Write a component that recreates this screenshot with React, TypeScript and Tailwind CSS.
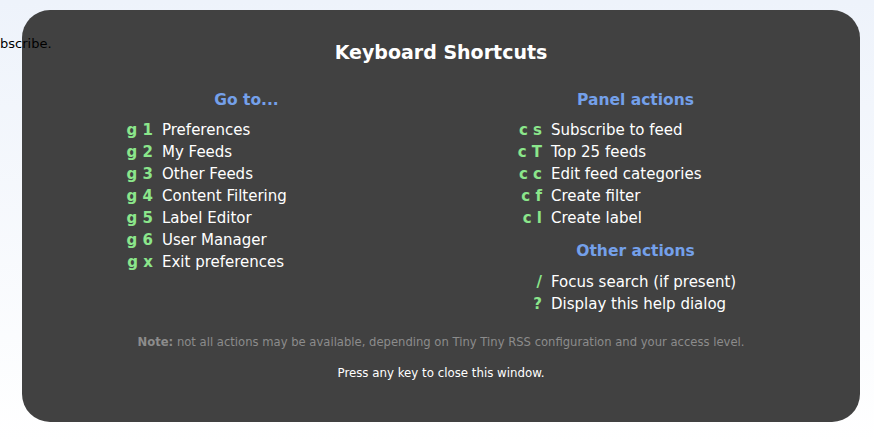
import React from "react";

const goTo: [string, string][] = [
  ["g 1", "Preferences"],
  ["g 2", "My Feeds"],
  ["g 3", "Other Feeds"],
  ["g 4", "Content Filtering"],
  ["g 5", "Label Editor"],
  ["g 6", "User Manager"],
  ["g x", "Exit preferences"],
];

const panel: [string, string][] = [
  ["c s", "Subscribe to feed"],
  ["c T", "Top 25 feeds"],
  ["c c", "Edit feed categories"],
  ["c f", "Create filter"],
  ["c l", "Create label"],
];

const other: [string, string][] = [
  ["/", "Focus search (if present)"],
  ["?", "Display this help dialog"],
];

function Rows({ items }: { items: [string, string][] }) {
  return (
    <div className="ml-[61px] flex flex-col">
      {items.map(([k, d]) => (
        <div key={k} className="flex h-[22px] items-center leading-[22px]">
          <span className="w-[40px] text-right font-bold text-[#8be68b]">{k}</span>
          <span className="ml-[9px] text-white">{d}</span>
        </div>
      ))}
    </div>
  );
}

function Heading({ children, className = "" }: { children: React.ReactNode; className?: string }) {
  return (
    <div className={"h-[22px] text-center text-[15.5px] font-bold leading-[22px] text-[#74a0ea] " + className}>
      {children}
    </div>
  );
}

export default function App() {
  return (
    <div
      className="relative min-h-[443px] w-[874px] overflow-hidden bg-gradient-to-b from-[#eef3fb] to-white pl-[22px] pt-[10px]"
      style={{ fontFamily: '"DejaVu Sans", "Liberation Sans", sans-serif' }}
    >
      <div className="flex h-[412px] w-[838px] flex-col rounded-[28px] bg-[#414141] px-[30px] pt-[30px] text-[15px]">
        <h1 className="h-[24px] text-center text-[19px] font-bold leading-[24px] text-white">
          Keyboard Shortcuts
        </h1>
        <div className="mt-[25px] grid grid-cols-2">
          <div>
            <Heading className="mb-[8px]">Go to...</Heading>
            <Rows items={goTo} />
          </div>
          <div>
            <Heading className="mb-[8px]">Panel actions</Heading>
            <Rows items={panel} />
            <Heading className="mb-[9px] mt-[11px]">Other actions</Heading>
            <Rows items={other} />
          </div>
        </div>
        <p className="mt-[19px] h-[16px] text-center text-[11.6px] leading-[16px] text-[#8c8c8c]">
          <b>Note:</b> not all actions may be available, depending on Tiny Tiny RSS configuration and your access level.
        </p>
        <p className="mt-[15px] h-[16px] text-center text-[11.8px] leading-[16px] text-white">
          Press any key to close this window.
        </p>
      </div>
      <div className="absolute left-0 top-[36px] text-[13px] leading-[16px] text-black">bscribe.</div>
    </div>
  );
}
